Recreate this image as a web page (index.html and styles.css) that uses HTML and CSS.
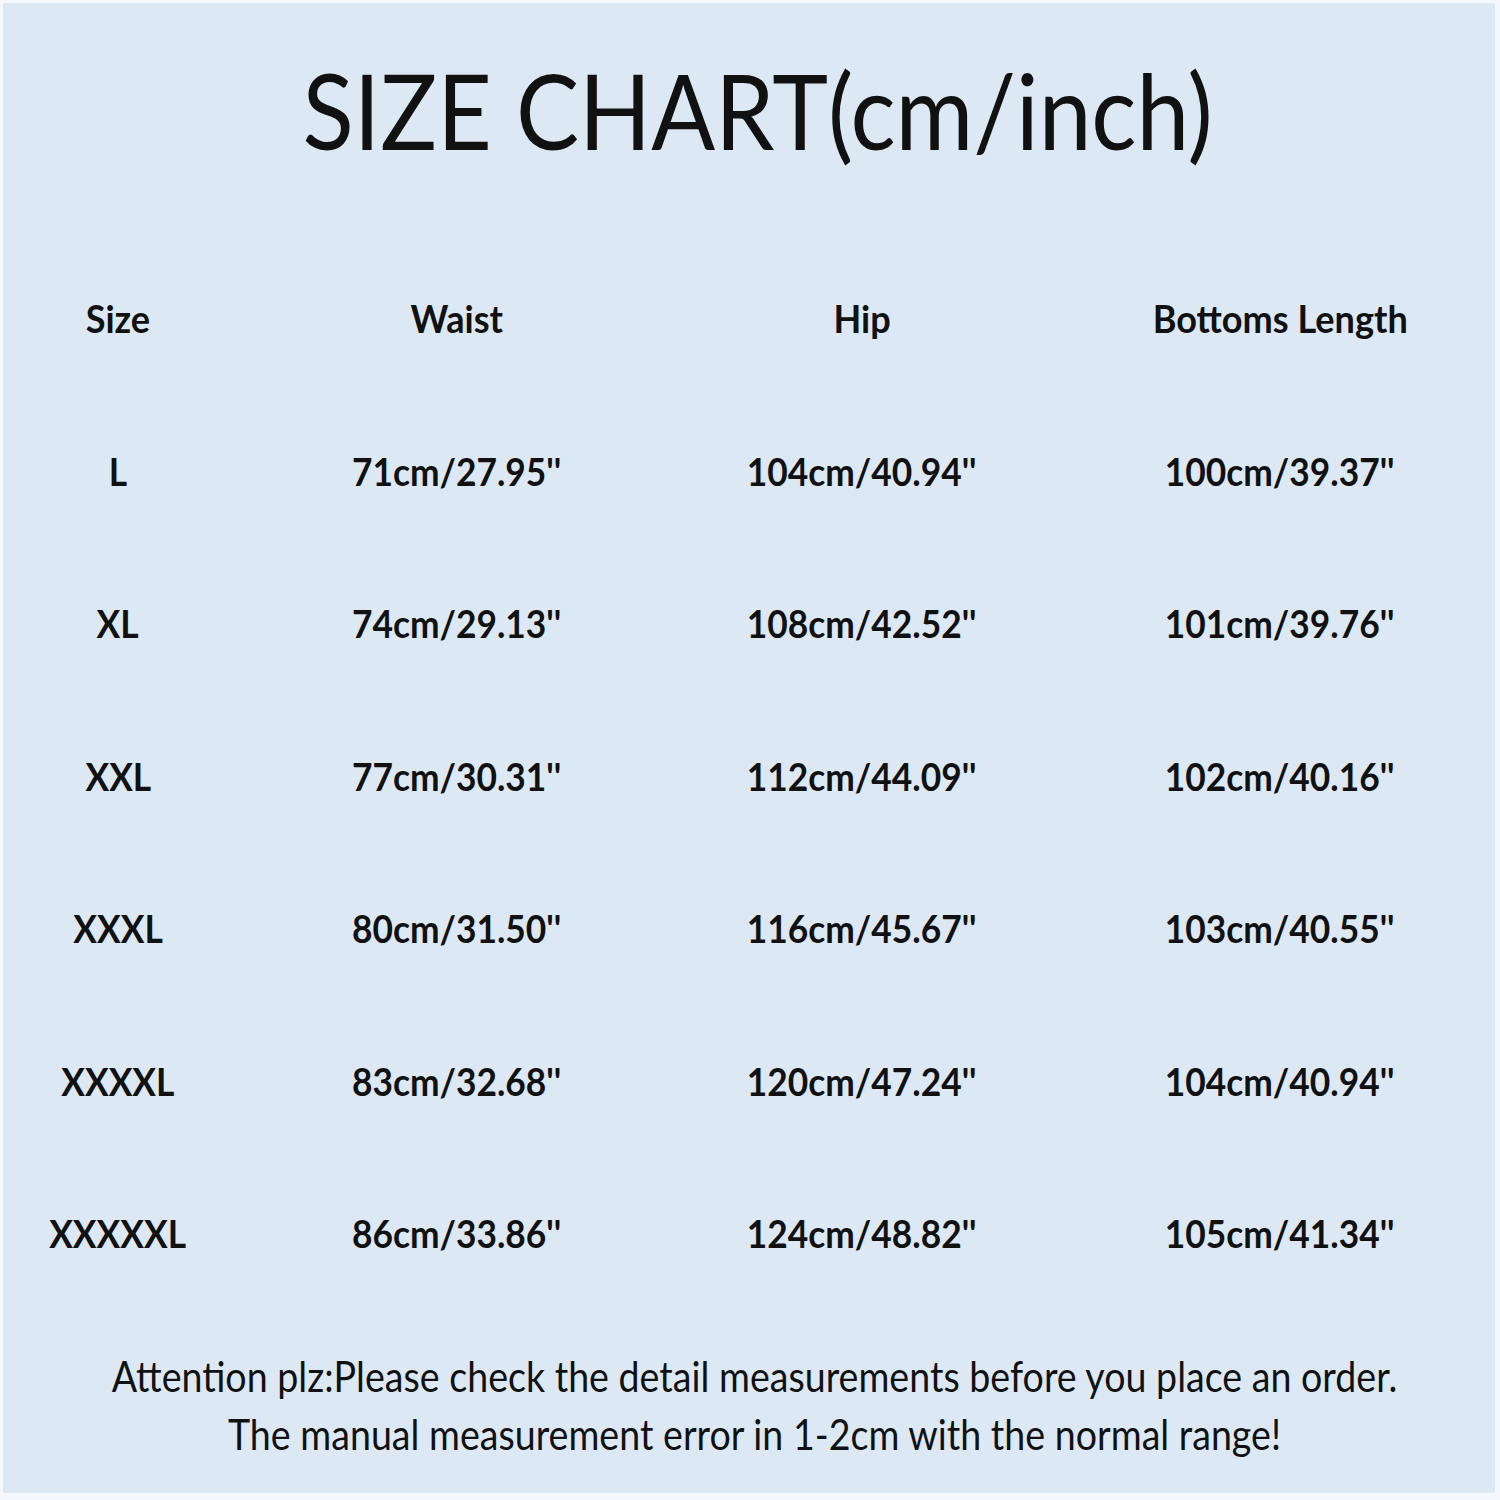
FILE: index.html
```html
<!DOCTYPE html>
<html lang="en">
<head>
<meta charset="utf-8">
<title>Size Chart</title>
<link rel="stylesheet" href="styles.css">
</head>
<body>
<div class="sheet">
  <h1 class="title"><span class="title-text">SIZE CHART(cm/inch)</span></h1>
  <div class="chart">
    <div class="cell head"><span class="t">Size</span></div>
    <div class="cell head"><span class="t">Waist</span></div>
    <div class="cell head"><span class="t">Hip</span></div>
    <div class="cell head"><span class="t">Bottoms Length</span></div>

    <div class="cell"><span class="t">L</span></div>
    <div class="cell"><span class="t">71cm/27.95''</span></div>
    <div class="cell"><span class="t">104cm/40.94''</span></div>
    <div class="cell"><span class="t">100cm/39.37''</span></div>

    <div class="cell"><span class="t">XL</span></div>
    <div class="cell"><span class="t">74cm/29.13''</span></div>
    <div class="cell"><span class="t">108cm/42.52''</span></div>
    <div class="cell"><span class="t">101cm/39.76''</span></div>

    <div class="cell"><span class="t">XXL</span></div>
    <div class="cell"><span class="t">77cm/30.31''</span></div>
    <div class="cell"><span class="t">112cm/44.09''</span></div>
    <div class="cell"><span class="t">102cm/40.16''</span></div>

    <div class="cell"><span class="t">XXXL</span></div>
    <div class="cell"><span class="t">80cm/31.50''</span></div>
    <div class="cell"><span class="t">116cm/45.67''</span></div>
    <div class="cell"><span class="t">103cm/40.55''</span></div>

    <div class="cell"><span class="t">XXXXL</span></div>
    <div class="cell"><span class="t">83cm/32.68''</span></div>
    <div class="cell"><span class="t">120cm/47.24''</span></div>
    <div class="cell"><span class="t">104cm/40.94''</span></div>

    <div class="cell"><span class="t">XXXXXL</span></div>
    <div class="cell"><span class="t">86cm/33.86''</span></div>
    <div class="cell"><span class="t">124cm/48.82''</span></div>
    <div class="cell"><span class="t">105cm/41.34''</span></div>
  </div>
  <div class="note">
    <p class="note-line">Attention plz:Please check the detail measurements before you place an order.</p>
    <p class="note-line">The manual measurement error in 1-2cm with the normal range!</p>
  </div>
</div>
</body>
</html>
```

FILE: styles.css
```css
html, body {
  margin: 0;
  padding: 0;
  background: #f4f8fc;
}

.sheet {
  box-sizing: border-box;
  margin: 3px 0 0 3px;
  width: 1492px;
  height: 1490px;
  background: #dce9f5;
  color: #111111;
  font-family: "Lato", "Open Sans", "Liberation Sans", sans-serif;
  overflow: hidden;
  padding-top: 43px;
}

.title {
  margin: 0;
  font-family: "Lato", "Liberation Sans", sans-serif;
  font-weight: 400;
  font-size: 105px;
  line-height: 126px;
  height: 126px;
  display: flex;
  justify-content: center;
  white-space: nowrap;
}

.title-text {
  display: inline-block;
  transform: scaleX(0.90);
  transform-origin: center;
  margin-left: 18px;
}

.chart {
  margin-top: 70px;
  padding-left: 15px;
  display: grid;
  grid-template-columns: 200px 398px 332px 424px;
  column-gap: 40px;
  grid-auto-rows: 152.5px;
}

.cell {
  display: flex;
  justify-content: center;
  align-items: center;
  white-space: nowrap;
  font-weight: 700;
  font-size: 38px;
  line-height: 46px;
}

.t {
  display: inline-block;
  transform: scaleX(0.93);
  transform-origin: center;
}

.head .t {
  transform: scaleX(0.95);
}

.note {
  margin-top: 37px;
  font-weight: 400;
  font-size: 42px;
  line-height: 58px;
  padding-left: 10px;
}

.note-line {
  margin: 0;
  text-align: center;
  white-space: nowrap;
  transform: scaleX(0.895);
  transform-origin: 746px 50%;
}
```
